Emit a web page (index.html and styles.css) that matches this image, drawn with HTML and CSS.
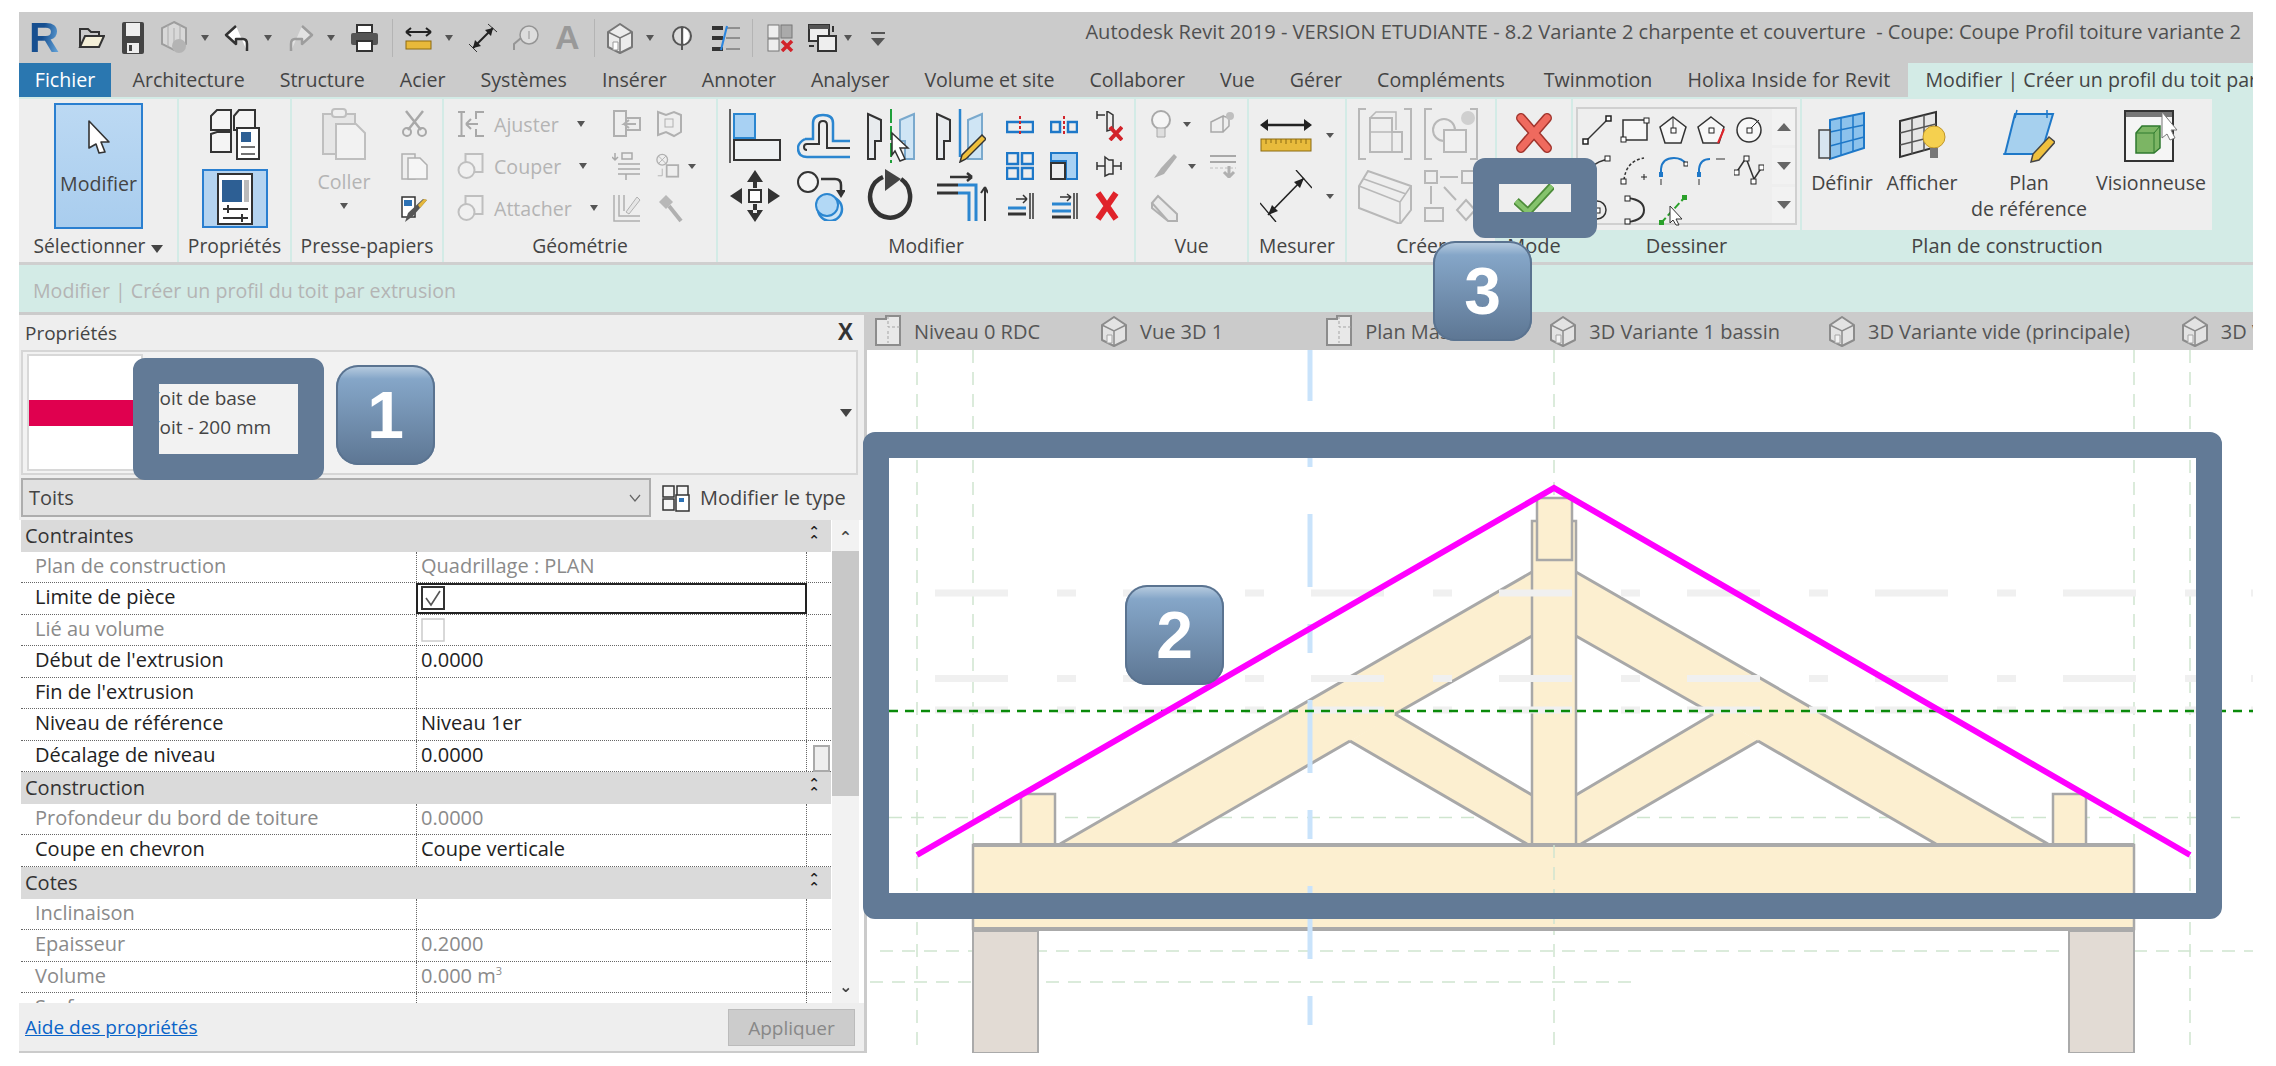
FILE: index.html
```html
<!DOCTYPE html>
<html lang="fr">

<head>
    <meta charset="UTF-8">
    <title>Revit - Créer un profil du toit par extrusion</title>
    <link rel="stylesheet" href="styles.css">
</head>

<body>
    <svg class="defs" width="0" height="0">
        <symbol id="house" viewBox="0 0 28 32">
            <path d="M14 2 L26 10 V25 L14 31 L2 25 V10 Z" fill="#ececec" stroke="#777" stroke-width="2" stroke-linejoin="round"/>
            <path d="M2 10 L14 16 L26 10 M14 16 V31" fill="none" stroke="#777" stroke-width="1.500"/>
            <path d="M7 20 h5 v8 h-5 z" fill="#fff" stroke="#999"/>
        </symbol>
        <symbol id="sheet" viewBox="0 0 28 32">
            <path d="M2 4 H12 V1 H26 V30 H2 Z" fill="#f2f2f2" stroke="#777" stroke-width="2"/>
            <path d="M14 1 V12 H26 M14 16 V28" fill="none" stroke="#999" stroke-dasharray="3 2"/>
        </symbol>
        <symbol id="hollow" viewBox="0 0 28 28">
            <rect x="9" y="2" width="17" height="18" fill="#f4f4f4" stroke="#888" stroke-width="2"/>
            <circle cx="10" cy="18" r="8" fill="#f4f4f4" stroke="#888" stroke-width="2"/>
        </symbol>
    </svg>

    <div class="app">
        <header class="qat">
            <div class="qat-tools">
                <span class="logo">R</span>
                <svg width="27" height="26" viewBox="0 0 27 26"><path d="M2 22 V4 H10 L13 7 H21 V11" fill="none" stroke="#333" stroke-width="2"/><path d="M2 22 L7 11 H26 L21 22 Z" fill="#f4efd8" stroke="#333" stroke-width="2"/></svg>
                <svg width="24" height="34" viewBox="0 0 24 34"><rect x="1" y="1" width="22" height="32" rx="2" fill="#444"/><rect x="5" y="2" width="14" height="13" fill="#eee"/><rect x="6" y="22" width="12" height="10" fill="#eee"/><rect x="8" y="24" width="3" height="6" fill="#444"/></svg>
                <svg class="off" width="29" height="36" viewBox="0 0 29 36"><path d="M14 2 L26 8 V24 L14 30 L2 24 V8 Z" fill="#e8e8e8" stroke="#666" stroke-width="2"/><path d="M8 5 V27 M14 8 V30 M20 5 V27" stroke="#888"/><circle cx="19" cy="26" r="7" fill="#999"/></svg>
                <span class="caret"></span>
                <svg width="27" height="28" viewBox="0 0 27 28"><path d="M12 2 L2 11 L12 20 V15 H19 Q23 15 23 20 V27" fill="#fff" stroke="#333" stroke-width="2.500" stroke-linejoin="round"/></svg>
                <span class="caret"></span>
                <svg class="off" width="27" height="28" viewBox="0 0 27 28"><path d="M15 2 L25 11 L15 20 V15 H8 Q4 15 4 20 V27" fill="#fff" stroke="#666" stroke-width="2.500" stroke-linejoin="round"/></svg>
                <span class="caret"></span>
                <svg width="29" height="28" viewBox="0 0 29 28"><rect x="7" y="1" width="15" height="8" fill="#fff" stroke="#333" stroke-width="2"/><rect x="1" y="9" width="27" height="12" rx="2" fill="#555"/><rect x="7" y="17" width="15" height="10" fill="#fff" stroke="#333" stroke-width="2"/></svg>
                <span class="qat-sep"></span>
                <svg width="27" height="24" viewBox="0 0 27 24"><path d="M1 6 H26 M1 6 L6 2 M1 6 L6 10 M26 6 L21 2 M26 6 L21 10" fill="none" stroke="#222" stroke-width="2"/><rect x="1" y="15" width="25" height="8" fill="#e8b93a" stroke="#8d6a10"/></svg>
                <span class="caret"></span>
                <svg width="30" height="30" viewBox="0 0 30 30"><path d="M5 25 L25 5" stroke="#222" stroke-width="2"/><path d="M25 5 L17 7 L23 13 Z M5 25 L13 23 L7 17 Z" fill="#222"/><path d="M20 1 L29 9 M1 21 L9 29" stroke="#333"/></svg>
                <svg class="off" width="28" height="26" viewBox="0 0 28 26"><circle cx="18" cy="10" r="9" fill="#f4f4f4" stroke="#555" stroke-width="1.500"/><path d="M18 6 V14" stroke="#555"/><path d="M10 13 L3 19 V25" fill="none" stroke="#555" stroke-width="2"/></svg>
                <span class="tool-a">A</span>
                <span class="qat-sep"></span>
                <svg width="28" height="32" viewBox="0 0 28 32"><use href="#house"/></svg>
                <span class="caret"></span>
                <svg width="23" height="26" viewBox="0 0 23 26"><circle cx="11" cy="11" r="9" fill="#ddd" stroke="#555" stroke-width="2"/><path d="M11 2 V25" stroke="#555" stroke-width="2"/><path d="M13 3 A9 9 0 0 1 13 19 Z" fill="#fff"/></svg>
                <svg width="30" height="26" viewBox="0 0 30 26"><path d="M1 3 H12 M1 13 H12 M1 24 H12" stroke="#333" stroke-width="4"/><path d="M15 3 H29 M15 13 H29 M15 24 H29" stroke="#555"/><path d="M16 1 L10 25" stroke="#2b86e0" stroke-width="2"/></svg>
                <span class="qat-sep"></span>
                <svg width="27" height="28" viewBox="0 0 27 28"><rect x="1" y="1" width="11" height="13" fill="#eee" stroke="#777"/><rect x="14" y="1" width="11" height="13" fill="#aaa" stroke="#777"/><rect x="1" y="15" width="11" height="12" fill="#eee" stroke="#777"/><path d="M15 17 L25 27 M25 17 L15 27" stroke="#d2232a" stroke-width="3.500"/></svg>
                <svg width="29" height="28" viewBox="0 0 29 28"><rect x="1" y="1" width="20" height="16" fill="#eee" stroke="#333" stroke-width="2"/><rect x="1" y="1" width="20" height="4" fill="#555"/><rect x="10" y="12" width="18" height="15" fill="#eee" stroke="#333" stroke-width="2"/><path d="M25 2 V8 M1 22 H6" stroke="#333" stroke-width="2"/></svg>
                <span class="caret"></span>
                <span class="more"></span>
            </div>
            <div class="title">Autodesk Revit 2019 - VERSION ETUDIANTE - 8.2 Variante 2 charpente et couverture  - Coupe: Coupe Profil toiture variante 2</div>
        </header>

        <nav class="tabs">
            <span class="tab tab-file">Fichier</span>
            <span class="tab">Architecture</span>
            <span class="tab">Structure</span>
            <span class="tab">Acier</span>
            <span class="tab">Systèmes</span>
            <span class="tab">Insérer</span>
            <span class="tab">Annoter</span>
            <span class="tab">Analyser</span>
            <span class="tab">Volume et site</span>
            <span class="tab">Collaborer</span>
            <span class="tab">Vue</span>
            <span class="tab">Gérer</span>
            <span class="tab">Compléments</span>
            <span class="tab tab-twin">Twinmotion</span>
            <span class="tab tab-holixa">Holixa Inside for Revit</span>
            <span class="tab tab-active">Modifier | Créer un profil du toit par extrusion</span>
        </nav>

        <section class="ribbon">
            <div class="group g-select">
                <div class="group-body">
                    <div class="btn-modify">
                        <svg width="24" height="34" viewBox="0 0 24 34"><path d="M2 1 L22 22 H14 L18 32 L12 33 L9 24 L2 28 Z" fill="#fff" stroke="#333" stroke-width="1.600" stroke-linejoin="round"/></svg>
                        <span>Modifier</span>
                    </div>
                </div>
                <div class="group-label">Sélectionner <span class="caret dark"></span></div>
            </div>

            <div class="group g-props">
                <div class="group-body">
                    <svg width="52" height="52" viewBox="0 0 52 52"><path d="M2 8 L8 2 H22 V22 H2 Z M25 8 L30 2 H46 V22 H25 Z M2 26 L8 24 H22 V44 H2 Z" fill="#f4f4f4" stroke="#333" stroke-width="2"/><rect x="28" y="20" width="22" height="31" fill="#fff" stroke="#333" stroke-width="2"/><rect x="32" y="24" width="10" height="10" fill="#2d5f94"/><path d="M32 39 H46 M32 46 H46" stroke="#444" stroke-width="1.500"/></svg>
                    <div class="btn-props">
                        <svg width="38" height="52" viewBox="0 0 38 52"><rect x="2" y="1" width="34" height="50" fill="#fff" stroke="#333" stroke-width="2"/><rect x="6" y="7" width="20" height="22" fill="#2d5f94"/><rect x="28" y="7" width="5" height="22" fill="#bbb"/><path d="M7 36 H32 M7 45 H32 M12 32 V40 M26 41 V49" stroke="#333" stroke-width="2"/></svg>
                    </div>
                </div>
                <div class="group-label">Propriétés</div>
            </div>

            <div class="group g-clip">
                <div class="group-body">
                    <div class="paste">
                        <svg class="off" width="44" height="52" viewBox="0 0 44 52"><rect x="1" y="6" width="32" height="40" fill="#ddd" stroke="#888" stroke-width="2"/><rect x="10" y="1" width="14" height="8" rx="3" fill="#eee" stroke="#888" stroke-width="2"/><path d="M14 16 H34 L43 25 V51 H14 Z" fill="#f7f7f7" stroke="#888" stroke-width="2"/></svg>
                        <span class="disabled">Coller</span>
                        <span class="caret"></span>
                    </div>
                    <div class="clip-tools">
                        <svg class="off" width="27" height="27" viewBox="0 0 27 27"><path d="M5 1 L20 20 M22 1 L7 20" stroke="#555" stroke-width="2.500"/><circle cx="6" cy="22" r="4" fill="none" stroke="#555" stroke-width="2"/><circle cx="21" cy="22" r="4" fill="none" stroke="#555" stroke-width="2"/></svg>
                        <svg class="off" width="27" height="27" viewBox="0 0 27 27"><path d="M1 1 H14 V26 H1 Z" fill="#eee" stroke="#666" stroke-width="1.500"/><path d="M7 5 H19 L26 12 V26 H7 Z" fill="#fff" stroke="#666" stroke-width="1.500"/></svg>
                        <svg width="27" height="27" viewBox="0 0 27 27"><rect x="1" y="1" width="13" height="20" fill="#fff" stroke="#333" stroke-width="1.500"/><rect x="3" y="4" width="8" height="6" fill="#2d72b5"/><path d="M26 4 L12 20 L4 26 L7 17 L22 3 Z" fill="#555"/><path d="M26 4 L19 12 L17 9 L23 3 Z" fill="#e5b73b"/></svg>
                    </div>
                </div>
                <div class="group-label">Presse-papiers</div>
            </div>

            <div class="group g-geo">
                <div class="group-body">
                    <div class="geo-tool">
                        <svg class="off" width="29" height="26" viewBox="0 0 29 26"><path d="M2 1 H9 M2 25 H9 M5.500 1 V25 M28 1 H20 V8 M28 25 H20 V18 M10 13 H22 M10 13 L15 8 M10 13 L15 18" fill="none" stroke="#555" stroke-width="2"/></svg>
                        <span class="disabled">Ajuster</span><span class="caret"></span>
                    </div>
                    <svg class="off" width="29" height="28" viewBox="0 0 29 28"><path d="M2 1 H14 L14 26 H2 Z M14 8 H28 V20 H14 M24 14 H12 L17 10 M12 14 L17 18" fill="none" stroke="#666" stroke-width="2"/></svg>
                    <svg class="off" width="27" height="28" viewBox="0 0 27 28"><path d="M2 2 L10 5 L18 2 L25 5 V22 L18 26 L10 22 L2 25 Z" fill="none" stroke="#666" stroke-width="2"/><rect x="9" y="9" width="8" height="8" fill="none" stroke="#666"/></svg>
                    <div class="geo-tool">
                        <svg class="off" width="29" height="28"><use href="#hollow"/></svg>
                        <span class="disabled">Couper</span><span class="caret"></span>
                    </div>
                    <svg class="off" width="29" height="28" viewBox="0 0 29 28"><path d="M3 1 V8 M0 5 L3 8 L6 5 M10 1 H20 V7 H10 Z M6 12 H28 M6 17 H28 M6 22 H28 M14 22 V28" fill="none" stroke="#555" stroke-width="1.500"/></svg>
                    <div class="geo-pair">
                        <svg class="off" width="27" height="28" viewBox="0 0 27 28"><circle cx="7" cy="7" r="6" fill="none" stroke="#666" stroke-width="1.500"/><path d="M3 3 L11 11 M11 3 L3 11 M7 17 V25 H2" fill="none" stroke="#666"/><rect x="12" y="13" width="13" height="13" fill="none" stroke="#666" stroke-width="2"/></svg>
                        <span class="caret small"></span>
                    </div>
                    <div class="geo-tool">
                        <svg class="off" width="29" height="28"><use href="#hollow"/></svg>
                        <span class="disabled">Attacher</span><span class="caret"></span>
                    </div>
                    <svg class="off" width="29" height="28" viewBox="0 0 29 28"><path d="M2 1 V27 H28 M7 1 V22 H28 M12 1 V17" fill="none" stroke="#666" stroke-width="1.500"/><path d="M14 18 L25 3 L28 6 L17 20 Z" fill="#ddd" stroke="#666"/></svg>
                    <svg class="off" width="27" height="30" viewBox="0 0 27 30"><path d="M3 9 L10 2 L17 9 L10 16 Z" fill="#777"/><path d="M13 13 L25 28" stroke="#666" stroke-width="4"/></svg>
                </div>
                <div class="group-label">Géométrie</div>
            </div>

            <div class="group g-mod">
                <div class="group-body">
                    <svg class="big" width="52" height="54" viewBox="0 0 52 54"><path d="M1 0 V54" stroke="#333" stroke-width="1.500"/><rect x="5" y="5" width="21" height="24" fill="#a8d1f3" stroke="#2b86d0" stroke-width="2"/><rect x="5" y="31" width="46" height="20" fill="#eef1f3" stroke="#333" stroke-width="2"/></svg>
                    <svg class="big" width="54" height="46" viewBox="0 0 54 46"><path d="M8 26 Q1 30 1 35 Q1 44 10 44 H53" fill="none" stroke="#2b86d0" stroke-width="2.500"/><path d="M8 26 H16 V10 Q16 2 26 2 Q36 2 36 10 V28 H53" fill="none" stroke="#2b86d0" stroke-width="2.500"/><path d="M10 37 Q7 37 7 34 Q7 31 10 31 H22 V12 Q22 8 26 8 Q30 8 30 12 V35 H53" fill="none" stroke="#333" stroke-width="2"/></svg>
                    <svg class="big" width="48" height="54" viewBox="0 0 48 54"><path d="M1 5 L14 11 L14 32 L8 32 V50 L1 50 Z" fill="#e8ebee" stroke="#333" stroke-width="2"/><path d="M47 5 L33 11 V32 L38 32 V50 H47 Z" fill="#cfe5f5" stroke="#7aa9cd" stroke-width="2"/><path d="M24 0 V54" stroke="#1fa03a" stroke-width="2" stroke-dasharray="14 3"/><path d="M25 24 L41 39 H33 L38 50 L33 52 L28 42 L25 46 Z" fill="#fff" stroke="#333" stroke-width="1.500"/></svg>
                    <svg class="big" width="50" height="54" viewBox="0 0 50 54"><path d="M1 5 L14 11 V32 H8 V50 H1 Z" fill="#e8ebee" stroke="#333" stroke-width="2"/><path d="M46 5 L32 11 V50 H46 Z" fill="#cfe5f5" stroke="#7aa9cd" stroke-width="2"/><path d="M24 0 V48" stroke="#2b86d0" stroke-width="2.500"/><path d="M46 26 L50 30 L30 50 L24 53 L26 46 Z" fill="#efc03d" stroke="#333" stroke-width="1.500"/></svg>
                    <div class="mod-small">
                        <svg width="28" height="20" viewBox="0 0 28 20"><rect x="1" y="6" width="26" height="10" fill="none" stroke="#1e78c8" stroke-width="2.500"/><path d="M14 0 V20" stroke="#d2232a" stroke-width="2" stroke-dasharray="3 2"/></svg>
                        <svg width="28" height="20" viewBox="0 0 28 20"><rect x="1" y="6" width="9" height="10" fill="none" stroke="#1e78c8" stroke-width="2.500"/><rect x="18" y="6" width="9" height="10" fill="none" stroke="#1e78c8" stroke-width="2.500"/><path d="M14 0 V20" stroke="#d2232a" stroke-width="2" stroke-dasharray="3 2"/></svg>
                        <svg width="28" height="30" viewBox="0 0 28 30"><path d="M2 4 H10 M2 0 V8 M12 0 L18 4 V18 L12 20 Z" fill="none" stroke="#333" stroke-width="1.500"/><path d="M15 16 L27 29 M27 16 L15 29" stroke="#d2232a" stroke-width="4"/></svg>
                        <svg width="28" height="28" viewBox="0 0 28 28"><rect x="1" y="1" width="11" height="11" fill="none" stroke="#1e78c8" stroke-width="2.500"/><rect x="16" y="1" width="11" height="11" fill="none" stroke="#1e78c8" stroke-width="2.500"/><rect x="1" y="16" width="11" height="11" fill="none" stroke="#1e78c8" stroke-width="2.500"/><rect x="16" y="16" width="11" height="11" fill="none" stroke="#1e78c8" stroke-width="2.500"/></svg>
                        <svg width="28" height="28" viewBox="0 0 28 28"><path d="M1 1 H27 V27 H16 V9 H1 Z" fill="#a8d1f3" stroke="#1e78c8" stroke-width="2"/><rect x="1" y="11" width="14" height="16" fill="#eee" stroke="#333" stroke-width="2"/></svg>
                        <svg width="28" height="24" viewBox="0 0 28 24"><path d="M2 12 H10 M2 8 V16 M26 12 H18 M26 8 V16 M10 3 L14 6 H18 V20 H14 L10 22 Z" fill="none" stroke="#333" stroke-width="1.500"/></svg>
                        <svg width="28" height="28" viewBox="0 0 28 28"><path d="M24 1 V27 M27 1 V27 M10 7 H21 M21 7 L17 3 M21 7 L17 11" fill="none" stroke="#333" stroke-width="1.500"/><path d="M2 16 H20" stroke="#2b86d0" stroke-width="3"/><path d="M2 22 H20" stroke="#333" stroke-width="3"/></svg>
                        <svg width="28" height="28" viewBox="0 0 28 28"><path d="M24 1 V27 M27 1 V27 M10 5 H21 M21 5 L17 2 M21 5 L17 9" fill="none" stroke="#333" stroke-width="1.500"/><path d="M2 12 H21 M2 19 H21" stroke="#2b86d0" stroke-width="3"/><path d="M2 25 H21" stroke="#333" stroke-width="3"/></svg>
                        <svg width="24" height="30" viewBox="0 0 24 30"><path d="M3 2 L21 28 M21 2 L3 28" stroke="#e0232a" stroke-width="6"/></svg>
                    </div>
                    <svg class="big" width="52" height="54" viewBox="0 0 52 54"><path d="M26 1 L34 13 H18 Z M26 53 L34 41 H18 Z M1 27 L13 19 V35 Z M51 27 L39 19 V35 Z M24 10 H28 V19 H24 Z M24 35 H28 V44 H24 Z" fill="#333"/><rect x="20" y="21" width="12" height="12" fill="#fff" stroke="#333" stroke-width="2"/></svg>
                    <svg class="big" width="48" height="50" viewBox="0 0 48 50"><circle cx="11" cy="11" r="10" fill="#f4f4f4" stroke="#333" stroke-width="2"/><path d="M24 8 H38 Q44 8 44 14 V20" fill="none" stroke="#333" stroke-width="2.500"/><path d="M44 27 L39 19 H49 Z" fill="#333"/><circle cx="33" cy="38" r="12" fill="#cfe5f5" stroke="#2b86d0" stroke-width="2.500"/><circle cx="30" cy="34" r="11" fill="#b2d8f5" stroke="#2b86d0" stroke-width="2"/></svg>
                    <svg class="big" width="46" height="54" viewBox="0 0 46 54"><path d="M16 8 A20 21 0 1 0 34 10" fill="none" stroke="#333" stroke-width="4.500"/><path d="M18 0 L34 10 L18 22 Z" fill="#444"/></svg>
                    <svg class="big" width="52" height="50" viewBox="0 0 52 50"><path d="M1 14 H22 M1 22 H22" stroke="#333" stroke-width="3"/><path d="M14 6 H36 M36 6 L31 2 M36 6 L31 10" fill="none" stroke="#333" stroke-width="2.500"/><path d="M22 14 H40 V50 M22 22 H33 V50" fill="none" stroke="#2b86d0" stroke-width="3"/><path d="M49 16 V50 M49 16 L45 22 M49 16 L52 22" fill="none" stroke="#333" stroke-width="2"/></svg>
                </div>
                <div class="group-label">Modifier</div>
            </div>

            <div class="group g-view">
                <div class="group-body">
                    <div class="view-tool"><svg class="off" width="23" height="28" viewBox="0 0 23 28"><circle cx="11" cy="10" r="9" fill="#fff" stroke="#555" stroke-width="2"/><path d="M7 18 H15 V27 H7 Z" fill="#ccc" stroke="#555"/></svg><span class="caret small"></span></div>
                    <svg class="off" width="28" height="28" viewBox="0 0 28 28"><path d="M2 12 L14 6 V22 H2 Z M14 22 L20 16 V8 L14 6" fill="#eee" stroke="#555" stroke-width="1.500"/><circle cx="21" cy="6" r="4" fill="#888"/></svg>
                    <div class="view-tool"><svg class="off" width="28" height="26" viewBox="0 0 28 26"><path d="M24 1 L11 15 L4 25 L14 21 L27 4 Z" fill="#666"/></svg><span class="caret small"></span></div>
                    <svg class="off" width="28" height="24" viewBox="0 0 28 24"><path d="M1 2 H27 M1 8 H27" stroke="#555" stroke-width="2"/><path d="M1 14 H27" stroke="#888" stroke-dasharray="3 2"/><path d="M20 12 V22 M15 18 L20 23 L25 18" fill="none" stroke="#666" stroke-width="3"/></svg>
                    <svg class="off eraser" width="28" height="28" viewBox="0 0 28 28"><path d="M2 9 L8 2 L27 20 V27 H18 Z M2 9 V14 L18 27" fill="#e6e6e6" stroke="#666" stroke-width="2"/></svg>
                </div>
                <div class="group-label">Vue</div>
            </div>

            <div class="group g-measure">
                <div class="group-body">
                    <div class="measure-tool">
                        <svg width="52" height="34" viewBox="0 0 52 34"><path d="M2 7 H50" stroke="#222" stroke-width="2.500"/><path d="M0 7 L8 1 V13 Z M52 7 L44 1 V13 Z" fill="#222"/><rect x="1" y="21" width="50" height="12" fill="#e8bb3c" stroke="#8a6a12"/><path d="M6 21 V26 M11 21 V25 M16 21 V26 M21 21 V25 M26 21 V26 M31 21 V25 M36 21 V26 M41 21 V25 M46 21 V26" stroke="#8a6a12"/></svg>
                        <span class="caret small"></span>
                    </div>
                    <div class="measure-tool">
                        <svg width="52" height="52" viewBox="0 0 52 52"><path d="M8 45 L44 8" stroke="#222" stroke-width="1.600"/><path d="M44 8 L34 12 L40 18 Z M8 45 L18 41 L12 35 Z" fill="#222"/><path d="M36 0 L52 18 M0 33 L16 52" stroke="#222" stroke-width="1.300"/></svg>
                        <span class="caret small"></span>
                    </div>
                </div>
                <div class="group-label">Mesurer</div>
            </div>

            <div class="group g-create">
                <div class="group-body">
                    <svg class="off" width="54" height="52" viewBox="0 0 54 52"><path d="M8 1 H1 V51 H8 M46 1 H53 V51 H46" fill="none" stroke="#777" stroke-width="2"/><path d="M12 10 H34 V24 H44 V44 H12 Z" fill="#eee" stroke="#777" stroke-width="2"/><path d="M12 24 H34 V44 M12 10 L18 4 H38 V22" fill="none" stroke="#777" stroke-width="1.500"/></svg>
                    <svg class="off" width="54" height="52" viewBox="0 0 54 52"><path d="M8 1 H1 V51 H8 M46 1 H53 V51 H46" fill="none" stroke="#777" stroke-width="2"/><circle cx="20" cy="22" r="11" fill="#eee" stroke="#777" stroke-width="2"/><rect x="20" y="22" width="22" height="22" fill="#f4f4f4" stroke="#777" stroke-width="2"/><circle cx="44" cy="10" r="7" fill="#aaa"/></svg>
                    <svg class="off" width="54" height="54" viewBox="0 0 54 54"><path d="M1 16 L10 1 L53 16 V40 L42 54 L1 38 Z" fill="#eee" stroke="#777" stroke-width="2"/><path d="M1 16 L42 32 V54 M42 32 L53 16 M6 9 L48 24" fill="none" stroke="#777" stroke-width="1.500"/></svg>
                    <svg class="off" width="52" height="52" viewBox="0 0 52 52"><rect x="1" y="1" width="12" height="12" fill="#eee" stroke="#777" stroke-width="2"/><rect x="38" y="1" width="12" height="12" fill="#eee" stroke="#777" stroke-width="2"/><rect x="1" y="38" width="18" height="13" fill="#eee" stroke="#777" stroke-width="2"/><path d="M16 7 H34 M7 16 V34 M20 17 L32 30 M42 30 L51 40 L42 50 L33 40 Z" fill="none" stroke="#777" stroke-width="2"/></svg>
                </div>
                <div class="group-label">Créer</div>
            </div>

            <div class="group g-mode">
                <div class="group-body">
                    <svg width="38" height="40" viewBox="0 0 38 40"><path d="M6 5 L32 35 M32 5 L6 35" stroke="#a2342c" stroke-width="10" stroke-linecap="round"/><path d="M6 5 L32 35 M32 5 L6 35" stroke="#ef6a5e" stroke-width="7" stroke-linecap="round"/></svg>
                    <svg width="40" height="30" viewBox="0 0 40 30"><path d="M2 17 L14 28 L38 2" fill="none" stroke="#4d8c3a" stroke-width="8"/><path d="M2 17 L14 28 L38 2" fill="none" stroke="#85c36c" stroke-width="4.500"/></svg>
                </div>
                <div class="group-label mint">Mode</div>
            </div>

            <div class="group g-draw">
                <div class="group-body">
                    <div class="gallery">
                        <div class="gallery-icons">
                            <svg width="30" height="30" viewBox="0 0 30 30"><path d="M3 27 L27 3" stroke="#333" stroke-width="1.500"/><rect x="1" y="24" width="5" height="5" fill="#fff" stroke="#222" stroke-width="1.500"/><rect x="24" y="1" width="5" height="5" fill="#fff" stroke="#222" stroke-width="1.500"/></svg>
                            <svg width="30" height="26" viewBox="0 0 30 26"><rect x="3" y="3" width="24" height="20" fill="#f7f7f7" stroke="#333" stroke-width="1.500"/><rect x="1" y="20" width="5" height="5" fill="#fff" stroke="#222"/><rect x="24" y="1" width="5" height="5" fill="#fff" stroke="#222"/></svg>
                            <svg width="30" height="30" viewBox="0 0 30 30"><path d="M15 2 L28 12 L23 28 H7 L2 12 Z" fill="#f7f7f7" stroke="#333" stroke-width="1.500"/><path d="M15 2 V15" stroke="#333"/><rect x="13" y="13" width="5" height="5" fill="#fff" stroke="#222"/></svg>
                            <svg width="30" height="30" viewBox="0 0 30 30"><path d="M15 2 L28 12 L23 28 H7 L2 12 Z" fill="#f7f7f7" stroke="#333" stroke-width="1.500"/><path d="M28 14 L22 28" stroke="#e0232a" stroke-width="2"/><rect x="13" y="13" width="5" height="5" fill="#fff" stroke="#222"/></svg>
                            <svg width="30" height="30" viewBox="0 0 30 30"><circle cx="15" cy="15" r="12" fill="#f7f7f7" stroke="#333" stroke-width="1.500"/><path d="M15 15 L25 5" stroke="#333"/><rect x="13" y="13" width="5" height="5" fill="#fff" stroke="#222"/></svg>
                            <svg width="30" height="30" viewBox="0 0 30 30"><path d="M3 27 Q5 8 27 4" fill="none" stroke="#333" stroke-width="1.500"/><rect x="23" y="1" width="5" height="5" fill="#fff" stroke="#222"/></svg>
                            <svg width="30" height="30" viewBox="0 0 30 30"><path d="M4 25 Q6 6 24 3" fill="none" stroke="#333" stroke-width="1.500" stroke-dasharray="3 2"/><rect x="1" y="24" width="5" height="5" fill="#fff" stroke="#222"/><path d="M21 22 H27 M24 19 V25" stroke="#222"/></svg>
                            <svg width="30" height="30" viewBox="0 0 30 30"><path d="M3 22 V14 Q4 3 16 3 Q24 3 28 9" fill="none" stroke="#1e78c8" stroke-width="2"/><rect x="1" y="17" width="4" height="5" fill="#1e78c8"/><path d="M3 24 V30" stroke="#333"/><rect x="26" y="7" width="4" height="4" fill="#fff" stroke="#222"/></svg>
                            <svg width="30" height="30" viewBox="0 0 30 30"><path d="M3 22 V14 Q4 4 14 4" fill="none" stroke="#1e78c8" stroke-width="2"/><rect x="1" y="17" width="4" height="5" fill="#1e78c8"/><path d="M3 24 V30 M20 4 H29" stroke="#333"/></svg>
                            <svg width="30" height="30" viewBox="0 0 30 30"><path d="M2 18 L12 3 L20 24 L28 12" fill="none" stroke="#333" stroke-width="1.500"/><rect x="10" y="1" width="5" height="5" fill="#fff" stroke="#222"/><rect x="17" y="24" width="5" height="5" fill="#fff" stroke="#222"/><rect x="0" y="15" width="5" height="5" fill="#fff" stroke="#222"/><rect x="25" y="10" width="5" height="5" fill="#fff" stroke="#222"/></svg>
                            <svg width="30" height="30" viewBox="0 0 30 30"><circle cx="15" cy="15" r="9" fill="none" stroke="#333" stroke-width="1.500"/><rect x="13" y="13" width="5" height="5" fill="#fff" stroke="#222"/></svg>
                            <svg width="30" height="30" viewBox="0 0 30 30"><path d="M8 3 Q24 5 24 15 Q24 25 8 27" fill="none" stroke="#333" stroke-width="2"/><rect x="5" y="1" width="5" height="5" fill="#fff" stroke="#222"/><rect x="5" y="24" width="5" height="5" fill="#fff" stroke="#222"/></svg>
                            <svg width="30" height="32" viewBox="0 0 30 32"><path d="M3 29 L27 3" stroke="#2aa02a" stroke-width="2" stroke-dasharray="7 3"/><rect x="1" y="26" width="5" height="5" fill="#2aa02a"/><rect x="24" y="1" width="5" height="5" fill="#2aa02a"/><path d="M12 12 L24 25 H18 L21 31 H18 L15 26 L12 29 Z" fill="#fff" stroke="#333"/></svg>
                        </div>
                        <div class="gallery-scroll">
                            <span class="up"></span>
                            <span class="down"></span>
                            <span class="expand"></span>
                        </div>
                    </div>
                </div>
                <div class="group-label mint">Dessiner</div>
            </div>

            <div class="group g-plane">
                <div class="group-body">
                    <div class="plane-tool t-def">
                        <svg width="48" height="48" viewBox="0 0 48 48"><path d="M12 8 L46 1 V36 L12 47 Z" fill="#8cc2ec" stroke="#1e78c8" stroke-width="2"/><path d="M23 6 V43 M35 4 V39 M12 20 L46 13 M12 34 L46 25" stroke="#1e78c8" stroke-width="1.500"/><path d="M1 18 H12 V46 H1 Z" fill="#d7e5f0" stroke="#444" stroke-width="1.500"/></svg>
                        <span>Définir</span>
                    </div>
                    <div class="plane-tool t-show">
                        <svg width="48" height="50" viewBox="0 0 48 50"><path d="M2 10 L38 1 V36 L2 46 Z" fill="#e6e6e6" stroke="#333" stroke-width="2"/><path d="M14 7 V43 M26 4 V40 M2 22 L38 13 M2 34 L38 25" stroke="#555" stroke-width="1.500"/><circle cx="36" cy="26" r="11" fill="#f5d04f" stroke="#c0962a"/><rect x="32" y="37" width="8" height="10" fill="#777"/></svg>
                        <span>Afficher</span>
                    </div>
                    <div class="plane-tool t-plane">
                        <svg width="52" height="52" viewBox="0 0 52 52"><path d="M12 4 H50 L38 44 H2 Z" fill="#a6d0ee" stroke="#1e78c8" stroke-width="2"/><path d="M0 44 H8 M44 0 V8 M14 0 L12 8" stroke="#1e78c8" stroke-width="1.500"/><path d="M46 27 L52 32 L36 50 L28 52 L30 44 Z" fill="#efc03d" stroke="#444" stroke-width="1.500"/></svg>
                        <span>Plan<br>de référence</span>
                    </div>
                    <div class="plane-tool t-viewer">
                        <svg width="54" height="52" viewBox="0 0 54 52"><rect x="1" y="1" width="48" height="50" fill="#f5f5f5" stroke="#333" stroke-width="2"/><rect x="2" y="2" width="46" height="5" fill="#777"/><path d="M12 23 L18 16 H36 V38 L30 43 H12 Z" fill="#7cb564" stroke="#2f7a2f" stroke-width="1.500"/><path d="M12 23 H30 V43 M30 23 L36 16" fill="none" stroke="#2f7a2f"/><path d="M38 2 L53 20 H47 L51 28 L46 30 L43 24 L38 28 Z" fill="#fff" stroke="#777"/></svg>
                        <span>Visionneuse</span>
                    </div>
                </div>
                <div class="group-label mint">Plan de construction</div>
            </div>
        </section>

        <div class="options">Modifier | Créer un profil du toit par extrusion</div>

        <main class="main">
            <aside class="panel">
                <div class="panel-title"><span>Propriétés</span><b class="close">X</b></div>
                <div class="type-box">
                    <div class="swatch"><i></i></div>
                    <div class="type-name">Toit de base<br>Toit - 200 mm</div>
                    <span class="caret dark"></span>
                </div>
                <div class="type-row">
                    <div class="combo"><span>Toits</span>
                        <svg width="12" height="8" viewBox="0 0 12 8"><path d="M1 1 L6 7 L11 1" fill="none" stroke="#666" stroke-width="1.200"/></svg>
                    </div>
                    <svg width="28" height="28" viewBox="0 0 28 28"><path d="M1 2 H12 V13 H1 Z M15 2 H26 V13 H15 Z M1 15 H12 V26 H1 Z" fill="#f5f5f5" stroke="#333" stroke-width="1.500"/><rect x="14" y="11" width="13" height="16" fill="#fff" stroke="#333" stroke-width="1.500"/><rect x="17" y="14" width="5" height="4" fill="#2d72b5"/></svg>
                    <span class="edit-type">Modifier le type</span>
                </div>
                <div class="grid-wrap">
                    <div class="grid">
                        <div class="section">Contraintes<span class="fold">⌃</span></div>
                        <div class="row off-row"><span>Plan de construction</span><span>Quadrillage : PLAN</span></div>
                        <div class="row"><span>Limite de pièce</span><span class="check-cell"><svg width="24" height="24" viewBox="0 0 24 24"><rect x="1" y="1" width="22" height="22" fill="#fff" stroke="#333" stroke-width="2"/><path d="M5 12 L10 19 L19 5" fill="none" stroke="#555" stroke-width="1.600"/></svg></span></div>
                        <div class="row off-row"><span>Lié au volume</span><span><svg width="24" height="24" viewBox="0 0 24 24"><rect x="1" y="1" width="22" height="22" fill="#fff" stroke="#ccc" stroke-width="1.500"/></svg></span></div>
                        <div class="row"><span>Début de l'extrusion</span><span>0.0000</span></div>
                        <div class="row"><span>Fin de l'extrusion</span><span></span></div>
                        <div class="row"><span>Niveau de référence</span><span>Niveau 1er</span></div>
                        <div class="row"><span>Décalage de niveau</span><span>0.0000</span><i class="spin"></i></div>
                        <div class="section">Construction<span class="fold">⌃</span></div>
                        <div class="row off-row"><span>Profondeur du bord de toiture</span><span>0.0000</span></div>
                        <div class="row"><span>Coupe en chevron</span><span>Coupe verticale</span></div>
                        <div class="section">Cotes<span class="fold">⌃</span></div>
                        <div class="row off-row"><span>Inclinaison</span><span></span></div>
                        <div class="row off-row"><span>Epaisseur</span><span>0.2000</span></div>
                        <div class="row off-row"><span>Volume</span><span>0.000 m<sup>3</sup></span></div>
                        <div class="row off-row"><span>Surface</span><span></span></div>
                    </div>
                    <div class="scrollbar">
                        <span class="scroll-arrow">⌃</span>
                        <div class="scroll-thumb"></div>
                        <span class="scroll-arrow flip">⌃</span>
                    </div>
                </div>
                <div class="panel-foot">
                    <a class="help">Aide des propriétés</a>
                    <span class="apply">Appliquer</span>
                </div>
            </aside>

            <section class="view">
                <div class="view-tabs">
                    <span class="vtab"><svg width="28" height="32"><use href="#sheet"/></svg>Niveau 0 RDC</span>
                    <span class="vtab"><svg width="28" height="32"><use href="#house"/></svg>Vue 3D 1</span>
                    <span class="vtab"><svg width="28" height="32"><use href="#sheet"/></svg>Plan Masse</span>
                    <span class="vtab"><svg width="28" height="32"><use href="#house"/></svg>3D Variante 1 bassin</span>
                    <span class="vtab"><svg width="28" height="32"><use href="#house"/></svg>3D Variante vide (principale)</span>
                    <span class="vtab"><svg width="28" height="32"><use href="#house"/></svg>3D Variante 2</span>
                </div>
                <svg class="drawing" viewBox="867 350 1386 703">
                    <g class="guide-green">
                        <path d="M917 350 V1053 M973 350 V1053 M1554 350 V1053 M2134 350 V1053 M2190 350 V1053"/>
                        <path d="M889 817.500 H2240 M880 951 H2253 M870 982 H1636"/>
                    </g>

                    <g class="timber">
                        <path d="M1532 572 L1060 844 H1172 L1532 636 Z" class="ghost"/>
                        <path d="M1532 572 L1060 844 M1532 636 L1395 714 M1350 741 L1172 844"/>
                        <path d="M1395 714 L1532 795 V844 H1527 L1350 741 Z" class="ghost"/>
                        <path d="M1395 714 L1532 795 M1350 741 L1527 844"/>
                        <path d="M1576 572 L2048 844 H1936 L1576 636 Z" class="ghost"/>
                        <path d="M1576 572 L2048 844 M1576 636 L1713 714 M1758 741 L1936 844"/>
                        <path d="M1713 714 L1576 795 V844 H1581 L1758 741 Z" class="ghost"/>
                        <path d="M1713 714 L1576 795 M1758 741 L1581 844"/>
                        <rect x="1532" y="521" width="44" height="324"/>
                        <rect x="1537" y="498" width="35" height="62"/>
                        <rect x="1021" y="794" width="34" height="51"/>
                        <rect x="2053" y="794" width="33" height="51"/>
                        <rect x="973" y="845" width="1161" height="84"/>
                    </g>
                    <path class="guide-grey" d="M935 593 H2253 M935 678.500 H2253 M935 710 H2253"/>
                    <path class="beam-edge" d="M973 845 H2134 M973 929 H2134"/>
                    <g class="column">
                        <path d="M973 931 V1053 H1038 V931 Z"/>
                        <path d="M2069 931 V1053 H2134 V931 Z"/>
                    </g>
                    <path class="guide-blue" d="M1310 328 V1053"/>
                    <path class="guide-level" d="M889 711 H2253"/>
                    <path class="guide-green" d="M1554 845 V929"/>
                    <path class="sketch" d="M917 855 L1554 488 L2190 855"/>
                </svg>
            </section>
        </main>
    </div>

    <div class="callout c-type"></div>
    <div class="callout c-roof"></div>
    <div class="callout c-check"></div>
    <div class="badge b-one">1</div>
    <div class="badge b-two">2</div>
    <div class="badge b-three">3</div>
</body>

</html>
```

FILE: styles.css
```css
* {
    box-sizing: border-box;
}

body {
    margin: 0;
    background: #fff;
    font-family: "Open Sans", "Noto Sans", sans-serif;
    font-size: 19.6px;
    color: #444;
    height: 1066px;
    overflow: hidden;
    position: relative;
}

.defs {
    position: absolute;
}

.app {
    margin: 12px 23px 0 19px;
    height: 1041px;
    display: flex;
    flex-direction: column;
    background: #cbcbcb;
}

.off {
    opacity: .45;
}

.disabled {
    color: #b4b4b4;
}

.caret {
    display: inline-block;
    width: 0;
    height: 0;
    border-top: 6px solid #555;
    border-left: 4px solid transparent;
    border-right: 4px solid transparent;
}

.caret.dark {
    border-top: 8px solid #444;
    border-left: 6px solid transparent;
    border-right: 6px solid transparent;
}

.caret.small {
    border-top-width: 5px;
}

/* barre d'acces rapide */
.qat {
    height: 51px;
    display: flex;
    align-items: center;
    justify-content: space-between;
}

.qat-tools {
    padding-left: 10px;
    display: grid;
    grid-template-columns: 49px 43px 39px 41px 23px 40px 23px 40px 23px 42px 13px 40px 23px 43px 44px 39px 12px 40px 25px 40px 41px 15px 41px 36px 27px 20px;
    align-items: center;
    justify-items: start;
}

.logo {
    font: bold 42px/44px "Liberation Sans", sans-serif;
    background: linear-gradient(100deg, #174f90 45%, #6fb0e4);
    -webkit-background-clip: text;
    background-clip: text;
    color: transparent;
}

.tool-a {
    font: bold 34px "Liberation Sans", sans-serif;
    color: #999;
}

.qat-sep {
    width: 1px;
    height: 38px;
    background: #b4b4b4;
}

.more {
    width: 14px;
    height: 12px;
    border-top: 2px solid #555;
    position: relative;
}

.more::after {
    content: "";
    position: absolute;
    left: 0;
    top: 4px;
    border-top: 8px solid #555;
    border-left: 7px solid transparent;
    border-right: 7px solid transparent;
}

.title {
    white-space: pre;
    padding-right: 12px;
    margin-top: -13px;
    font-size: 20.100px;
    color: #505050;
}

/* onglets */
.tabs {
    height: 34px;
    display: flex;
    align-items: center;
    flex-shrink: 0;
}

.tab {
    padding: 0 17.500px;
    white-space: nowrap;
    line-height: 34px;
}

.tab-file {
    width: 92px;
    padding: 0;
    margin-right: 4px;
    text-align: center;
    background: #2a77b0;
    color: #fff;
}

.tab-twin {
    margin-left: 4px;
}

.tab-holixa {
    letter-spacing: .2px;
}

.tab-active {
    flex: 1;
    min-width: 0;
    overflow: hidden;
    background: #d3ebe6;
}

/* ruban */
.ribbon {
    height: 168px;
    flex-shrink: 0;
    padding-top: 2px;
    border-bottom: 3px solid #cfcfcf;
    background: #d3ebe6;
    display: flex;
    gap: 2px;
}

.group {
    display: flex;
    flex-direction: column;
    background: #eee;
}

.group-body {
    height: 131px;
    flex-shrink: 0;
    position: relative;
}

.group-label {
    height: 32px;
    line-height: 32px;
    text-align: center;
    white-space: nowrap;
    font-size: 19.300px;
}

.group-label.mint {
    background: #d3ebe6;
    font-size: 20px;
}

.g-select { width: 158px; }
.g-props { width: 111px; }
.g-clip { width: 150px; }
.g-geo { width: 272px; }
.g-mod { width: 416px; }
.g-view { width: 111px; }
.g-measure { width: 96px; }
.g-create { width: 148px; }
.g-mode { width: 74px; }
.g-draw { width: 227px; }
.g-plane { width: 410px; }

.g-select .group-body {
    padding: 4px 0 0 35px;
}

.btn-modify {
    width: 89px;
    height: 126px;
    border: 2px solid #2a7fd0;
    background: linear-gradient(#bcd9f3, #a9cdee);
    display: flex;
    flex-direction: column;
    align-items: center;
    padding-top: 15px;
    gap: 16px;
}

.g-props .group-body {
    display: flex;
    flex-direction: column;
    align-items: center;
    padding-top: 9px;
    gap: 9px;
}

.btn-props {
    width: 66px;
    height: 59px;
    border: 2px solid #2a7fd0;
    background: #b5d4f0;
    display: flex;
    justify-content: center;
    align-items: center;
}

.g-clip .group-body {
    display: flex;
    padding: 9px 14px 0 30px;
    justify-content: space-between;
}

.paste {
    width: 44px;
    display: flex;
    flex-direction: column;
    align-items: center;
    gap: 8px;
}

.clip-tools {
    display: flex;
    flex-direction: column;
    gap: 16px;
    padding-top: 2px;
}

.g-geo .group-body {
    display: grid;
    grid-template-columns: 156px 44px 40px;
    grid-auto-rows: 42px;
    padding: 4px 0 0 12px;
    align-items: center;
}

.geo-tool {
    display: flex;
    align-items: center;
    gap: 9px;
}

.geo-tool .caret {
    margin-left: 9px;
}

.geo-pair {
    display: flex;
    gap: 8px;
    align-items: center;
}

.g-mod .group-body {
    display: grid;
    grid-template-columns: 68px 70px 69px 70px 1fr;
    grid-template-rows: 60px 60px;
    padding: 7px 0 0 11px;
    align-items: center;
}

.mod-small {
    grid-column: 5;
    grid-row: 1 / 3;
    display: grid;
    grid-template-columns: 44px 45px 30px;
    grid-auto-rows: 40px;
    align-items: center;
    justify-items: start;
}

.g-view .group-body {
    display: grid;
    grid-template-columns: 59px 1fr;
    grid-auto-rows: 42px;
    padding: 4px 0 0 14px;
    align-items: center;
}

.view-tool {
    display: flex;
    align-items: center;
    gap: 10px;
}

.g-measure .group-body {
    padding: 19px 0 0 11px;
    display: flex;
    flex-direction: column;
    gap: 18px;
}

.measure-tool {
    display: flex;
    align-items: center;
    gap: 14px;
}

.g-create .group-body {
    display: grid;
    grid-template-columns: 66px 60px;
    grid-auto-rows: 62px;
    padding: 9px 0 0 11px;
    align-items: start;
}

.g-mode .group-body {
    display: flex;
    flex-direction: column;
    align-items: center;
    padding-top: 14px;
    gap: 31px;
}

.g-draw .group-body {
    padding: 8px 3px 0;
}

.gallery {
    height: 118px;
    display: flex;
    border: 2px solid #d0d0d0;
}

.gallery-icons {
    width: 194px;
    display: grid;
    grid-template-columns: repeat(5, 38px);
    grid-auto-rows: 40px;
    align-items: center;
    justify-items: center;
    padding-top: 1px;
}

.gallery-scroll {
    flex: 1;
    display: flex;
    flex-direction: column;
    gap: 3px;
}

.gallery-scroll span {
    flex: 1;
    background: #f2f2f2;
    position: relative;
}

.gallery-scroll span::after {
    content: "";
    position: absolute;
    left: 5px;
    top: 14px;
    border-left: 7px solid transparent;
    border-right: 7px solid transparent;
}

.gallery-scroll .up::after {
    border-bottom: 8px solid #666;
}

.gallery-scroll .down::after,
.gallery-scroll .expand::after {
    border-top: 8px solid #666;
}

.g-plane .group-body {
    display: flex;
    padding: 8px 0 0 8px;
}

.plane-tool {
    display: flex;
    flex-direction: column;
    align-items: center;
    text-align: center;
    line-height: 26px;
    white-space: nowrap;
}

.plane-tool svg {
    height: 58px;
    margin-bottom: 5px;
}

.t-def { width: 64px; }
.t-show { width: 80px; margin-left: 8px; }
.t-plane { width: 122px; margin-left: 6px; }
.t-viewer { width: 110px; margin-left: 6px; }

/* barre d'options */
.options {
    height: 47px;
    line-height: 51px;
    flex-shrink: 0;
    padding-left: 14px;
    background: #d3ebe6;
    color: #b4b4b4;
    white-space: nowrap;
}

/* zone principale */
.main {
    flex: 1;
    min-height: 0;
    display: flex;
    background: #fff;
    box-shadow: inset 0 3px 0 #cbcbcb;
}

.panel {
    width: 845px;
    margin-top: 3px;
    background: #eee;
    display: flex;
    flex-direction: column;
    border-bottom: 2px solid #cbcbcb;
    position: relative;
    font-size: 20px;
}

.panel-title {
    height: 35px;
    display: flex;
    justify-content: space-between;
    align-items: center;
    padding: 0 11px 0 6px;
    flex-shrink: 0;
    font-size: 19px;
}

.close {
    font: bold 23px "Liberation Sans", sans-serif;
    color: #333;
}

.type-box {
    height: 125px;
    margin: 0 6px 0 2px;
    border: 2px solid #d6d6d6;
    background: #f2f2f2;
    display: flex;
    align-items: center;
    padding: 0 4px;
    flex-shrink: 0;
}

.type-box .caret {
    margin-left: auto;
}

.swatch {
    width: 116px;
    height: 117px;
    background: #fff;
    border: 2px solid #d8d8d8;
    display: flex;
    align-items: center;
}

.swatch i {
    width: 100%;
    height: 26px;
    background: #e0004f;
}

.type-name {
    margin-left: 6px;
    line-height: 29px;
    font-size: 19px;
}

.type-row {
    height: 39px;
    margin-top: 3px;
    display: flex;
    align-items: center;
    flex-shrink: 0;
    padding-left: 2px;
}

.combo {
    width: 630px;
    height: 39px;
    background: #e1e1e1;
    border: 2px solid #adadad;
    padding: 0 8px 0 6px;
    display: flex;
    justify-content: space-between;
    align-items: center;
    margin-right: 11px;
}

.edit-type {
    margin-left: 10px;
}

.grid-wrap {
    flex: 1;
    min-height: 0;
    margin-top: 3px;
    display: flex;
    overflow: hidden;
    background: #fff;
}

.grid {
    width: 810px;
    margin-left: 2px;
    background: #fff;
    flex-shrink: 0;
}

.section {
    height: 32px;
    line-height: 31px;
    padding-left: 4px;
    background: #dadada;
    color: #333;
    position: relative;
}

.fold {
    position: absolute;
    right: 11px;
    top: 7px;
    font: bold 14px/9px "DejaVu Sans", sans-serif;
    color: #222;
}

.fold::after {
    content: "⌃";
    display: block;
}

.row {
    height: 31.430px;
    display: grid;
    grid-template-columns: 395px 391px 1fr;
    border-bottom: 1px dotted #666;
    line-height: 28px;
    color: #222;
    position: relative;
}

.row > span:first-child {
    padding-left: 14px;
    white-space: nowrap;
}

.row > span:nth-child(2) {
    padding-left: 4px;
    border-left: 1px dotted #666;
    border-right: 1px dotted #666;
}

.off-row {
    color: #8a8a8a;
}

.row svg {
    display: block;
    margin-top: 3px;
}

.check-cell {
    outline: 2px solid #222;
    outline-offset: -2px;
}

.row sup {
    font-size: 11px;
    line-height: 0;
}

.spin {
    position: absolute;
    right: 1px;
    top: 4px;
    width: 17px;
    height: 27px;
    background: #eee;
    border: 2px solid #aaa;
}

.scrollbar {
    width: 27px;
    margin-left: 1px;
    display: flex;
    flex-direction: column;
    align-items: center;
    background: #f2f2f2;
}

.scroll-arrow {
    height: 31px;
    font: bold 16px/36px "DejaVu Sans", sans-serif;
    color: #444;
}

.scroll-arrow.flip {
    transform: rotate(180deg);
    margin-top: auto;
    margin-bottom: 0;
}

.scroll-thumb {
    width: 100%;
    height: 245px;
    background: #c8c8c8;
}

.panel-foot {
    height: 48px;
    flex-shrink: 0;
    display: flex;
    justify-content: space-between;
    align-items: center;
    padding: 0 9px 0 6px;
    font-size: 19px;
}

.help {
    color: #0a64c8;
    text-decoration: underline;
}

.apply {
    width: 127px;
    height: 37px;
    line-height: 36px;
    text-align: center;
    background: #ccc;
    border: 1px solid #bbb;
    color: #888;
}

/* vue */
.view {
    flex: 1;
    min-width: 0;
    display: flex;
    flex-direction: column;
    border-left: 3px solid #cbcbcb;
}

.view-tabs {
    height: 38px;
    flex-shrink: 0;
    background: #cbcbcb;
    display: flex;
    align-items: center;
    gap: 51px;
    padding-left: 7px;
    overflow: hidden;
    white-space: nowrap;
    color: #555;
    font-size: 20px;
}

.vtab {
    display: flex;
    align-items: center;
    gap: 12px;
}

.vtab svg {
    flex-shrink: 0;
    opacity: .75;
}

.vtab:nth-child(1) { margin-right: 9px; }
.vtab:nth-child(2) { margin-right: 51px; }
.vtab:nth-child(3) { margin-right: 28px; }
.vtab:nth-child(4) { margin-right: -3px; }

.drawing {
    flex: 1;
    min-height: 0;
    display: block;
    width: 100%;
}

.guide-green path,
path.guide-green {
    fill: none;
    stroke: #cfe5cf;
    stroke-width: 1.500;
    stroke-dasharray: 13 9;
}

.guide-grey {
    fill: none;
    stroke: #f0f0f0;
    stroke-width: 7;
    stroke-dasharray: 73 49 19 47;
}

.guide-blue {
    fill: none;
    stroke: #c9e3fb;
    stroke-width: 5;
    stroke-dasharray: 73 37 29 47;
}

.guide-level {
    fill: none;
    stroke: #0a8a0a;
    stroke-width: 2.500;
    stroke-dasharray: 9 7;
}

.timber path {
    fill: none;
    stroke: #a8a8a8;
    stroke-width: 3;
}

.timber .ghost {
    fill: #fcefd0;
    stroke: none;
}

.timber rect {
    fill: #fcefd0;
    stroke: #a8a8a8;
    stroke-width: 2.500;
}

.beam-edge {
    fill: none;
    stroke: #aaa;
    stroke-width: 4;
}

.column path {
    fill: #e2dbd4;
    stroke: #aaa;
    stroke-width: 2;
}

.sketch {
    fill: none;
    stroke: #f0f;
    stroke-width: 6;
}

/* annotations par dessus la capture */
.callout {
    position: absolute;
    border: 26px solid #627a96;
    border-radius: 12px;
}

.c-type { left: 133px; top: 358px; width: 191px; height: 122px; }
.c-roof { left: 863px; top: 432px; width: 1359px; height: 487px; }
.c-check { left: 1473px; top: 158px; width: 124px; height: 80px; }

.badge {
    position: absolute;
    width: 99px;
    height: 100px;
    border-radius: 22px;
    background: linear-gradient(#bdd0e2 0, #85a6c8 14%, #5d7693 100%);
    box-shadow: inset 0 0 0 2px #5a7390;
    color: #fff;
    font: bold 66px/100px "Liberation Sans", sans-serif;
    text-align: center;
}

.b-one { left: 336px; top: 365px; }
.b-two { left: 1125px; top: 585px; }
.b-three { left: 1433px; top: 241px; }
```
